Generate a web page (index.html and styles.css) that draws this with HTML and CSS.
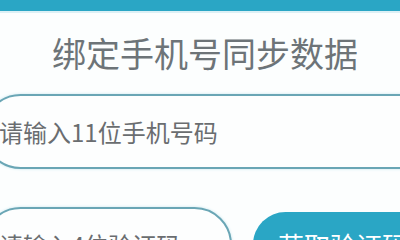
FILE: index.html
```html
<!DOCTYPE html>
<html lang="zh-CN">
<head>
<meta charset="utf-8">
<title>绑定手机号同步数据</title>
<link rel="stylesheet" href="styles.css">
</head>
<body>
<div class="page">
  <div class="topbar"></div>
  <h1 class="title">绑定手机号同步数据</h1>
  <div class="field field-phone"><span class="placeholder">请输入11位手机号码</span></div>
  <div class="code-row">
    <div class="field field-code"><span class="placeholder">请输入4位验证码</span></div>
    <div class="btn-code">获取验证码</div>
  </div>
</div>
</body>
</html>
```

FILE: styles.css
```css
html, body {
  margin: 0;
  padding: 0;
  background: #fcfefe;
}
.page {
  width: 400px;
  height: 240px;
  overflow: hidden;
  font-family: "Noto Sans CJK SC", "Noto Sans", sans-serif;
}
.topbar {
  height: 11px;
  background: #2aa6c5;
  border-bottom: 2px solid #dcf0f5;
}
.title {
  margin: 23px 0 0 0;
  padding-left: 52px;
  font-size: 34px;
  line-height: 34px;
  font-weight: 400;
  color: #6d7478;
  white-space: nowrap;
}
.field {
  box-sizing: border-box;
  height: 75px;
  border: 2px solid #6aa6b5;
  border-radius: 38px;
  box-shadow: 0 0 3px #c6e6ee;
  display: flex;
  align-items: center;
  padding-left: 14px;
  background: #fdfefe;
}
.placeholder {
  font-size: 24px;
  color: #6a6d70;
  white-space: nowrap;
}
.field-phone {
  margin: 24px -60px 0 -17px;
}
.code-row {
  display: flex;
  align-items: center;
  gap: 21px;
  margin: 38px 0 0 -17px;
}
.field-code {
  width: 249px;
  flex: none;
}
.btn-code {
  flex: none;
  box-sizing: border-box;
  width: 200px;
  height: 65px;
  border-radius: 33px;
  background: #2aa6c5;
  color: #ffffff;
  font-size: 26px;
  display: flex;
  align-items: center;
  padding-left: 25px;
  white-space: nowrap;
}
```
